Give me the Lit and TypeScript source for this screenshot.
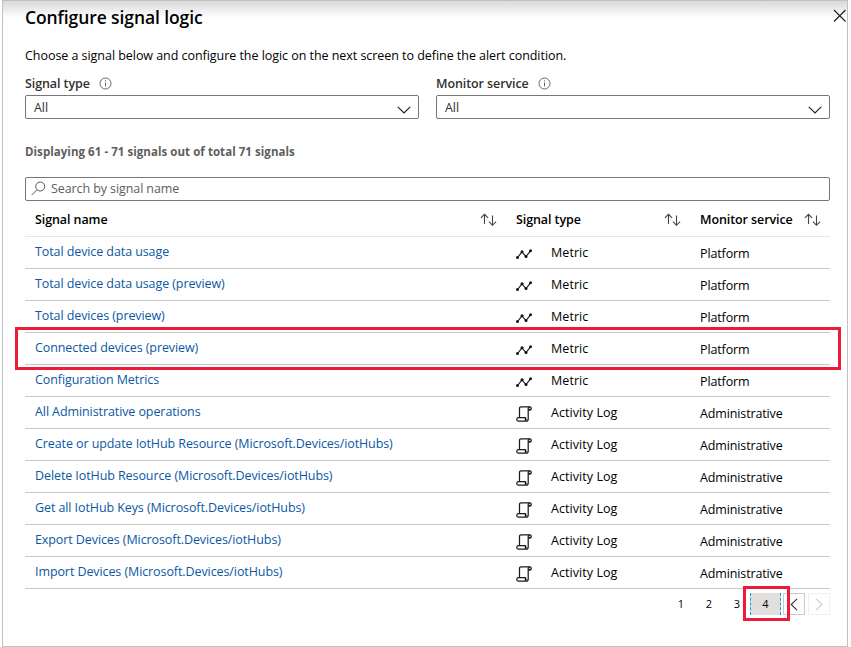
import { LitElement, html, css, svg } from "lit";
import { customElement } from "lit/decorators.js";
import { classMap } from "lit/directives/class-map.js";

type Signal = { name: string; kind: "Metric" | "Activity Log"; service: string };

const metric = (name: string): Signal => ({ name, kind: "Metric", service: "Platform" });
const log = (name: string): Signal => ({ name, kind: "Activity Log", service: "Administrative" });

const SIGNALS: Signal[] = [
  metric("Total device data usage"),
  metric("Total device data usage (preview)"),
  metric("Total devices (preview)"),
  metric("Connected devices (preview)"),
  metric("Configuration Metrics"),
  log("All Administrative operations"),
  log("Create or update IotHub Resource (Microsoft.Devices/iotHubs)"),
  log("Delete IotHub Resource (Microsoft.Devices/iotHubs)"),
  log("Get all IotHub Keys (Microsoft.Devices/iotHubs)"),
  log("Export Devices (Microsoft.Devices/iotHubs)"),
  log("Import Devices (Microsoft.Devices/iotHubs)"),
];

const infoIcon = html`<svg class="info" width="13" height="13" viewBox="0 0 13 13">
  <circle cx="6.5" cy="6.5" r="5.5" fill="none" stroke="#666" stroke-width="1" />
  <path d="M6.5 5.5V9.5M6.5 3.3V4.4" stroke="#666" stroke-width="1" />
</svg>`;
const chevron = html`<svg width="14" height="8" viewBox="0 0 14 8">
  <path d="M.8 .8L7 7L13.2 .8" fill="none" stroke="#222" stroke-width="1.2" />
</svg>`;
const sortIcon = html`<svg class="sort" width="17" height="14" viewBox="0 0 17 14">
  <path d="M4.5 11V1.3M.9 4.9L4.5 1.3L8.1 4.9M12.5 2.5V12.3M8.9 8.7L12.5 12.3L16.1 8.7" fill="none" stroke="#444" stroke-width="1.1" />
</svg>`;
const metricIcon = html`<svg class="icon" width="16" height="16" viewBox="0 0 16 16">
  <path d="M1.5 11.5L6 5.8L10 10.5L14.5 4.8" fill="none" stroke="#111" stroke-width="1.1" />
  ${[[1.5, 11.5], [6, 5.8], [10, 10.5], [14.5, 4.8]].map(([x, y]) => svg`<circle cx=${x} cy=${y} r="1.5" fill="#111" />`)}
</svg>`;
const logIcon = html`<svg class="icon" width="16" height="16" viewBox="0 0 16 16">
  <path d="M3.5 11.5V2.6Q3.5 .8 5.2 .8H13.6Q15.3 .8 15.3 2.5Q15.3 4.2 13.7 4.2H12.3M13.7 4.2V2.8M13.7 .8Q12.2 .8 12.2 2.6V13Q12.2 15.2 10.4 15.2H2.5Q.8 15.2 .8 13.4Q.8 11.6 2.5 11.6H9.4V13.4H10.8M9.4 13.4Q9.4 15.2 10.6 15.2" fill="none" stroke="#1a1a1a" stroke-width="1.25" />
</svg>`;

@customElement("app-root")
export class AppRoot extends LitElement {
  static styles = css`
    :host { display: block; width: 851px; height: 647px; background: #fff; overflow: hidden; position: relative;
      font: 12.5px/18px "Open Sans", "Noto Sans", sans-serif; color: #000; letter-spacing: -0.09px; }
    * { box-sizing: border-box; }
    svg { display: block; flex: none; }
    .blade { width: 846px; height: 647px; margin-left: 2px; border: 1px solid #c1c1c1;
      padding: 0 17px 0 22px; background: linear-gradient(#d9d9d9, #fff 17px) no-repeat; }
    header { display: flex; height: 31px; align-items: center; justify-content: space-between; margin-right: -17px; }
    h1 { margin: 0; font-size: 17.5px; font-weight: 600; line-height: 24px; letter-spacing: -0.1px; }
    header svg { margin-bottom: 1px; }
    .intro { margin: 15px 0 0; height: 18px; white-space: nowrap; letter-spacing: -0.045px; }
    .filters { display: grid; grid-template-columns: 394px 394px; gap: 17px; margin-top: 10px; }
    .label { display: flex; align-items: center; gap: 9px; height: 18px; font-weight: 600; color: #323130; }
    .info { margin-bottom: 2px; }
    .select { display: flex; align-items: center; justify-content: space-between; height: 24px; margin-top: 2px;
      padding: 1px 7px 0 8px; border: 1px solid #777; border-radius: 2px; color: #323130; }
    .select svg { margin-top: 5px; }
    .count { margin-top: 24px; height: 18px; color: #605e5c; font-weight: 700; font-size: 11.5px; letter-spacing: 0.05px; }
    .search { display: flex; align-items: center; gap: 5px; height: 24px; margin-top: 16px; padding-left: 5px;
      border: 1px solid #777; border-radius: 2px; color: #605e5c; }
    .search svg { margin-bottom: 2px; }
    .row { display: grid; grid-template-columns: 481px 184px 1fr; height: 32px; padding-left: 10px; border-bottom: 1px solid #c8c8c8; white-space: nowrap; }
    .row.head { height: 36px; border-color: #e6e6e6; font-weight: 600; }
    .cell { display: flex; align-items: center; }
    .head .cell { justify-content: space-between; padding: 3px 19px 0 0; }
    .head .cell:last-child { padding-right: 9px; }
    .name { color: #0b57a4; padding-bottom: 1px; }
    .kind { gap: 19px; padding-top: 1px; }
    .kind span { letter-spacing: 0.06px; }
    .kind .icon { margin-top: 2px; }
    .service { padding-top: 3px; }
    .service span { letter-spacing: -0.13px; }
    .pager { display: flex; height: 24px; margin-top: 3px; justify-content: flex-end; align-items: center; font-size: 11px; letter-spacing: 0; }
    .page { width: 28px; text-align: center; padding-left: 2px; }
    .page.current { width: 31px; height: 22px; padding: 0; line-height: 22px; background: #e1dfdd; border: 1px dashed #00a2e0; border-width: 0 1px; }
    .step { display: grid; place-items: center; width: 22px; height: 22px; border: 1px solid #c8c8c8; margin-left: 2px; }
    .step.off { border-color: #f0f0f0; margin-left: 3px; }
    .mark { position: absolute; border: 3px solid #ed1b3a; pointer-events: none; }
    .mark.line { left: 15px; top: 327px; width: 826px; height: 43px; }
    .mark.number { left: 743px; top: 586px; width: 47px; height: 35px; }
  `;

  private field(label: string) {
    return html`<div>
      <div class="label"><span>${label}</span>${infoIcon}</div>
      <div class="select"><span>All</span>${chevron}</div>
    </div>`;
  }

  render() {
    return html`
      <section class="blade">
        <header>
          <h1>Configure signal logic</h1>
          <svg width="14" height="14" viewBox="0 0 14 14"><path d="M1 1L12.5 12.5M12.5 1L1 12.5" stroke="#222" stroke-width="1.2" /></svg>
        </header>
        <p class="intro">Choose a signal below and configure the logic on the next screen to define the alert condition.</p>
        <div class="filters">${this.field("Signal type")}${this.field("Monitor service")}</div>
        <div class="count">Displaying 61 - 71 signals out of total 71 signals</div>
        <div class="search">
          <svg width="15" height="15" viewBox="0 0 15 15"><path d="M.7 14L6 8.7" stroke="#555" /><circle cx="9.2" cy="5.5" r="4.5" fill="none" stroke="#555" /></svg>
          <span>Search by signal name</span>
        </div>
        <div class="row head">
          ${["Signal name", "Signal type", "Monitor service"].map((t) => html`<div class="cell"><span>${t}</span>${sortIcon}</div>`)}
        </div>
        ${SIGNALS.map((s) => html`<div class="row">
          <div class="cell name"><span>${s.name}</span></div>
          <div class="cell kind">${s.kind === "Metric" ? metricIcon : logIcon}<span>${s.kind}</span></div>
          <div class="cell service"><span>${s.service}</span></div>
        </div>`)}
        <nav class="pager">
          ${[1, 2, 3, 4].map((n) => html`<span class=${classMap({ page: true, current: n === 4 })}>${n}</span>`)}
          <span class="step"><svg width="8" height="13" viewBox="0 0 8 13"><path d="M7 .8L1.2 6.5L7 12.2" fill="none" stroke="#333" stroke-width="1.1" /></svg></span>
          <span class="step off"><svg width="8" height="13" viewBox="0 0 8 13"><path d="M1 .8L6.8 6.5L1 12.2" fill="none" stroke="#ccc" stroke-width="1.1" /></svg></span>
        </nav>
      </section>
      <div class="mark line"></div>
      <div class="mark number"></div>
    `;
  }
}
